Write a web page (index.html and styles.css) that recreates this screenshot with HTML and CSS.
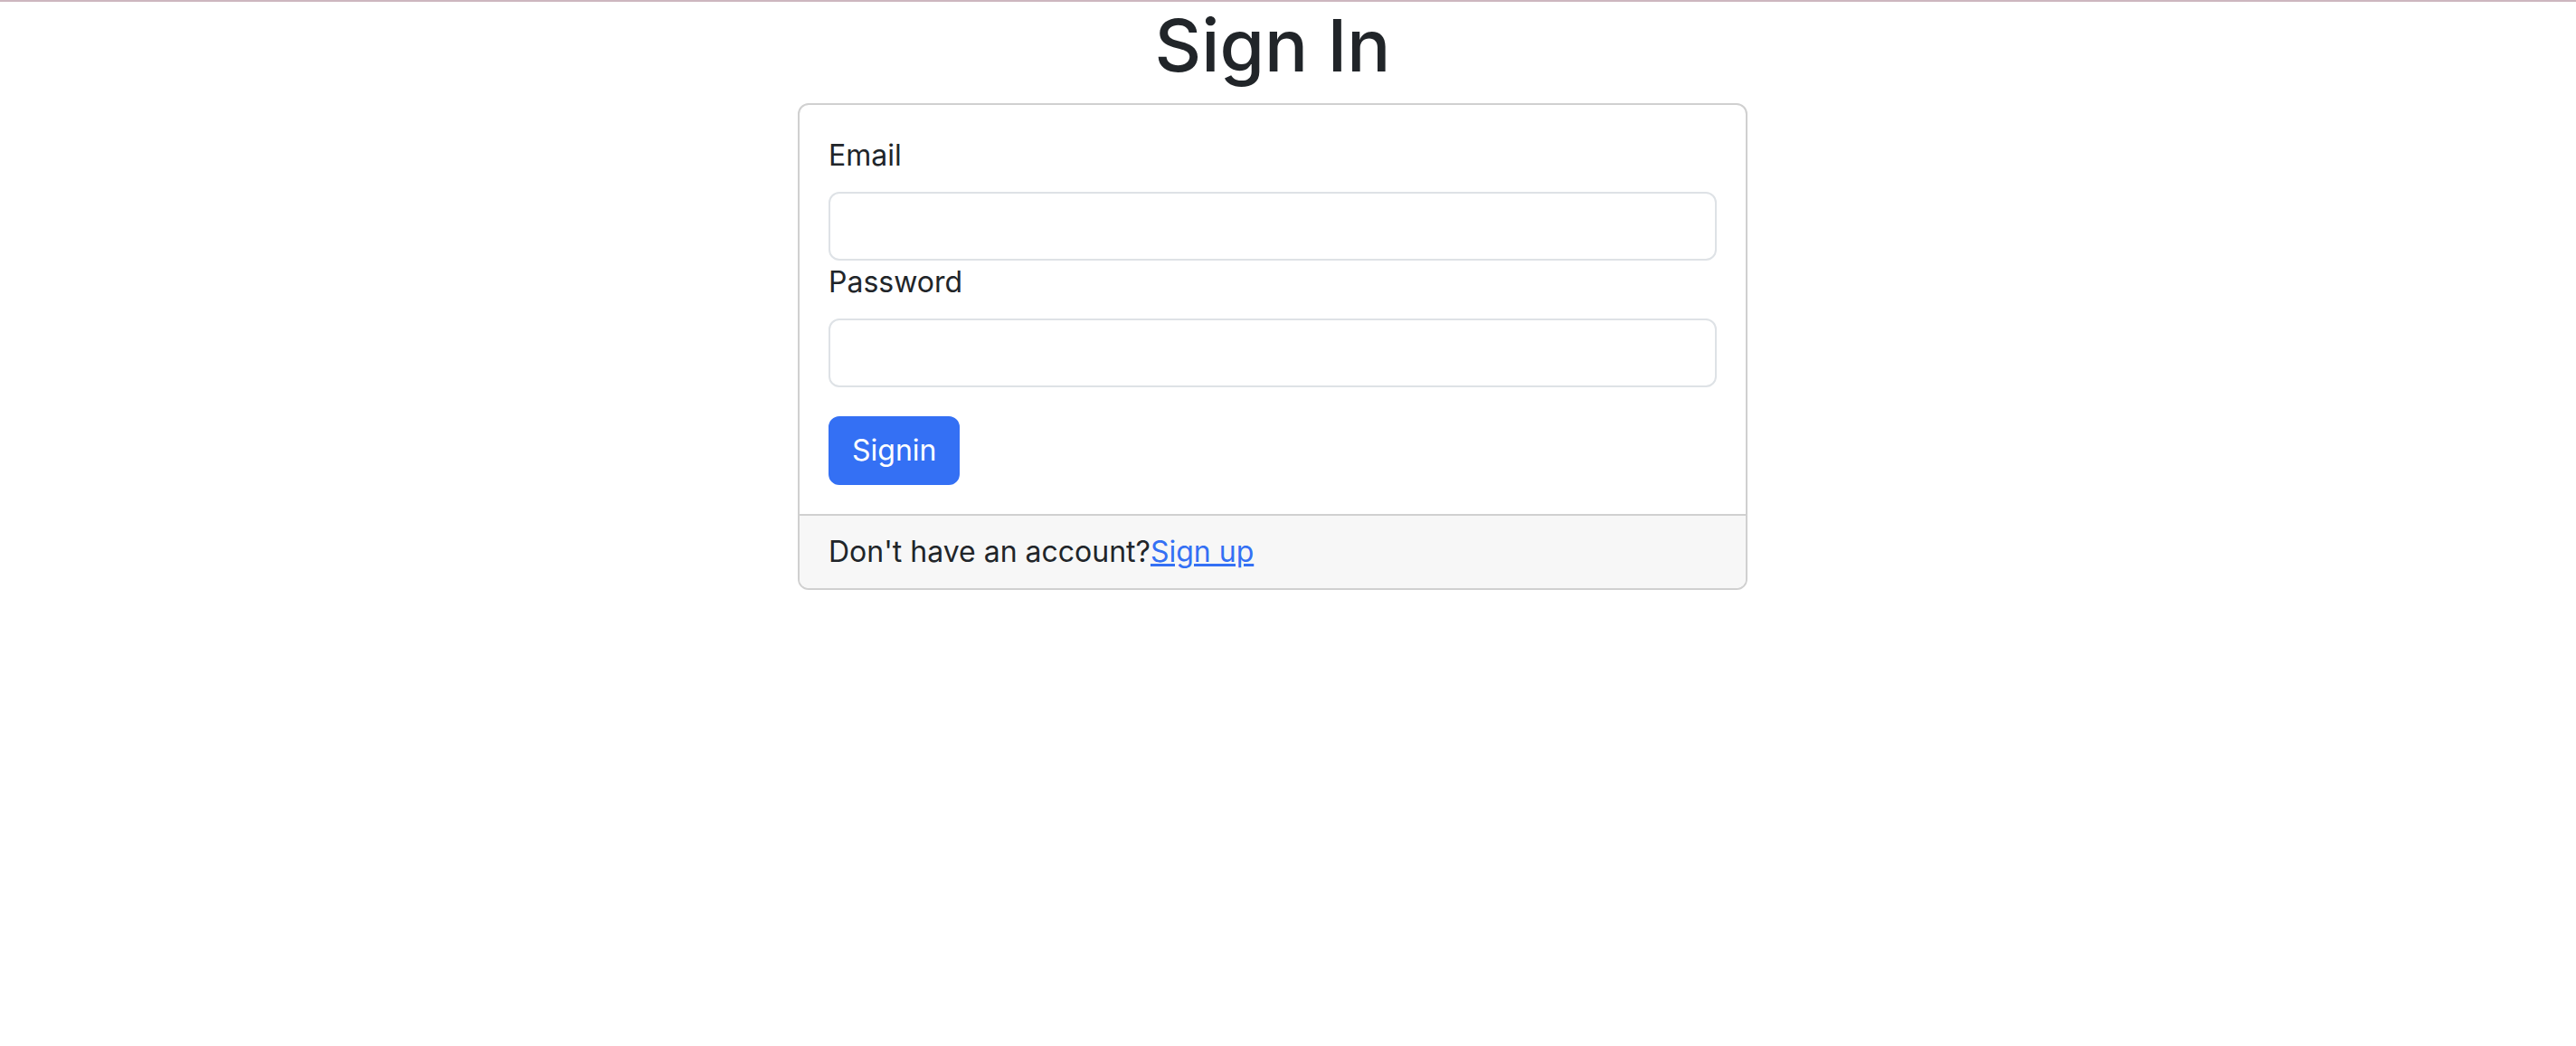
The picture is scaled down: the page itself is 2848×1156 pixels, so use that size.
FILE: index.html
```html
<!DOCTYPE html>
<html lang="en">
<head>
<meta charset="utf-8">
<title>Sign In</title>
<link rel="stylesheet" href="styles.css">
</head>
<body>
<div class="topline"></div>
<main class="page">
  <h1 class="title">Sign In</h1>
  <div class="card">
    <form class="card-body">
      <label class="label" for="email">Email</label>
      <input class="input" id="email" type="email">
      <label class="label" for="password">Password</label>
      <input class="input" id="password" type="password">
      <button class="btn" type="button">Signin</button>
    </form>
    <div class="card-footer">Don't have an account?<a href="#" class="link">Sign up</a></div>
  </div>
</main>
</body>
</html>
```

FILE: styles.css
```css
html, body {
  margin: 0;
  padding: 0;
  background: #ffffff;
}

body {
  font-family: Inter, "Noto Sans", "Liberation Sans", sans-serif;
  font-size: 32px;
  line-height: 1.5;
  color: #212529;
}

.topline {
  height: 2px;
  background: #cdb6bf;
}

.page {
  display: flex;
  flex-direction: column;
  align-items: center;
  padding-right: 34px;
}

.title {
  font-size: 80px;
  font-weight: 500;
  line-height: 1.2;
  margin: 0 0 16px;
}

.card {
  width: 1050px;
  box-sizing: border-box;
  border: 2px solid #d0d0d0;
  border-radius: 12px;
  overflow: hidden;
  background: #ffffff;
}

.card-body {
  display: flex;
  flex-direction: column;
  align-items: stretch;
  padding: 32px;
  margin: 0;
}

.label {
  display: block;
  margin-bottom: 16px;
}

.input {
  display: block;
  width: 100%;
  box-sizing: border-box;
  height: 76px;
  padding: 12px 24px;
  font: inherit;
  color: #212529;
  background: #ffffff;
  border: 2px solid #dee2e6;
  border-radius: 12px;
  outline: none;
}

.btn {
  align-self: flex-start;
  margin-top: 32px;
  padding: 12px 24px;
  font: inherit;
  line-height: 1.5;
  color: #ffffff;
  background: #3470f4;
  border: 2px solid #3470f4;
  border-radius: 12px;
  cursor: pointer;
}

.card-footer {
  padding: 16px 32px;
  background: #f7f7f7;
  border-top: 2px solid #d0d0d0;
}

.link {
  color: #3470f4;
  text-decoration: underline;
}
```
